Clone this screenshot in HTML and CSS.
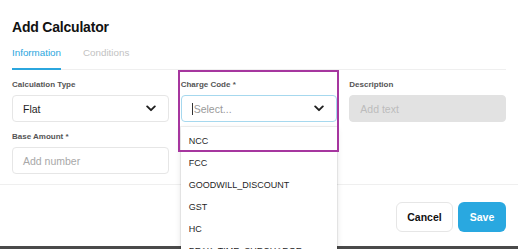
FILE: index.html
```html
<!DOCTYPE html>
<html lang="en">
  <head>
    <meta charset="UTF-8" />
    <meta name="viewport" content="width=device-width, initial-scale=1.0" />
    <title>Add Calculator</title>
    <link rel="stylesheet" href="styles.css">
  </head>
  <body>
    <div class="modal">
      <div class="modal-header">
        <h1>Add Calculator</h1>
        <div class="tabs">
          <span class="tab active">Information</span>
          <span class="tab">Conditions</span>
        </div>
      </div>

      <div class="form-grid">
        <div class="field">
          <label>Calculation Type</label>
          <div class="select">
            <span class="value">Flat</span>
            <svg class="chevron" width="10" height="7" viewBox="0 0 10 7">
              <path d="M1.2 1.4 5 5.2 8.8 1.4" fill="none" stroke="#1f1f1f" stroke-width="1.9" stroke-linecap="round" stroke-linejoin="round" />
            </svg>
          </div>
        </div>

        <div class="field charge-field">
          <label>Charge Code *</label>
          <div class="select focused">
            <span class="placeholder"><span class="caret"></span>Select...</span>
            <svg class="chevron" width="10" height="7" viewBox="0 0 10 7">
              <path d="M1.2 1.4 5 5.2 8.8 1.4" fill="none" stroke="#1f1f1f" stroke-width="1.9" stroke-linecap="round" stroke-linejoin="round" />
            </svg>
          </div>
          <ul class="dropdown-menu">
            <li>NCC</li>
            <li>FCC</li>
            <li>GOODWILL_DISCOUNT</li>
            <li>GST</li>
            <li>HC</li>
            <li>PEAK_TIME_SURCHARGE</li>
          </ul>
          <div class="highlight"></div>
        </div>

        <div class="field">
          <label>Description</label>
          <div class="input disabled">Add text</div>
        </div>

        <div class="field">
          <label>Base Amount *</label>
          <div class="input">Add number</div>
        </div>
      </div>

      <div class="modal-footer">
        <button class="btn btn-cancel">Cancel</button>
        <button class="btn btn-save">Save</button>
      </div>
    </div>
    <div class="screen-edge"></div>
  </body>
</html>
```

FILE: styles.css
```css
* {
  margin: 0;
  padding: 0;
  box-sizing: border-box;
}

html,
body {
  height: 100%;
  overflow: hidden;
}

body {
  font-family: "Liberation Sans", Arial, sans-serif;
  background: white;
  color: #1f1f1f;
  display: flex;
  flex-direction: column;
}

.modal {
  flex: 1;
  display: flex;
  flex-direction: column;
}

.modal-header {
  padding: 19px 12px 0;
}

.modal-header h1 {
  font-size: 14px;
  line-height: 16px;
  font-weight: 700;
  letter-spacing: -0.2px;
  color: #111;
}

.tabs {
  display: flex;
  gap: 22px;
  margin-top: 12px;
  border-bottom: 1px solid #efefef;
}

.tab {
  font-size: 9.8px;
  line-height: 12px;
  color: #c2c2c2;
  padding-bottom: 9px;
  border-bottom: 2px solid transparent;
  margin-bottom: -1px;
}

.tab.active {
  color: #2ba6de;
  border-bottom: 2px solid #2ba6de;
}

.form-grid {
  display: grid;
  grid-template-columns: repeat(3, 1fr);
  column-gap: 12px;
  row-gap: 10px;
  padding: 10px 12px 0;
}

.field {
  display: flex;
  flex-direction: column;
  gap: 5px;
}

.field label {
  font-size: 8px;
  line-height: 10px;
  font-weight: 700;
  color: #555;
}

.select,
.input {
  height: 27px;
  border: 1px solid #e6e6e6;
  border-radius: 4px;
  padding: 0 12px 0 10px;
  display: flex;
  align-items: center;
  font-size: 10.5px;
}

.select {
  justify-content: space-between;
}

.select .value {
  color: #1f1f1f;
}

.select.focused {
  border-color: #a6d8ee;
}

.placeholder {
  color: #9a9a9a;
  display: flex;
  align-items: center;
}

.caret {
  display: inline-block;
  width: 1px;
  height: 12px;
  background: #333;
  margin-right: 1px;
}

.input {
  color: #a8a8a8;
}

.input.disabled {
  background: #e2e2e2;
  border-color: #e2e2e2;
  color: #bcbcbc;
}

.charge-field {
  position: relative;
}

.dropdown-menu {
  position: absolute;
  top: 47px;
  left: 0;
  right: 0;
  max-height: 122px;
  overflow: hidden;
  list-style: none;
  background: white;
  padding-top: 3px;
  box-shadow: 0 0 0 1px rgba(0, 0, 0, 0.06), 0 2px 6px rgba(0, 0, 0, 0.12);
  z-index: 2;
}

.dropdown-menu li {
  height: 22px;
  line-height: 22px;
  padding-left: 8px;
  font-size: 9px;
  color: #1f1f1f;
}

.highlight {
  position: absolute;
  top: -10px;
  left: -3px;
  right: -2px;
  height: 82px;
  border: 2px solid #a6369f;
  z-index: 3;
}

.modal-footer {
  border-top: 1px solid #efefef;
  padding: 17px 12px 14px;
  display: flex;
  justify-content: flex-end;
  gap: 5px;
  margin-top: auto;
}

.btn {
  height: 30px;
  border-radius: 6px;
  font-family: inherit;
  font-size: 10.5px;
  font-weight: 700;
  border: 1px solid transparent;
}

.btn-cancel {
  width: 57px;
  background: white;
  border-color: #e6e6e6;
  color: #111;
}

.btn-save {
  width: 48px;
  background: #29a8e0;
  color: white;
}

.screen-edge {
  height: 3px;
  background: #4a4a4a;
}
```
